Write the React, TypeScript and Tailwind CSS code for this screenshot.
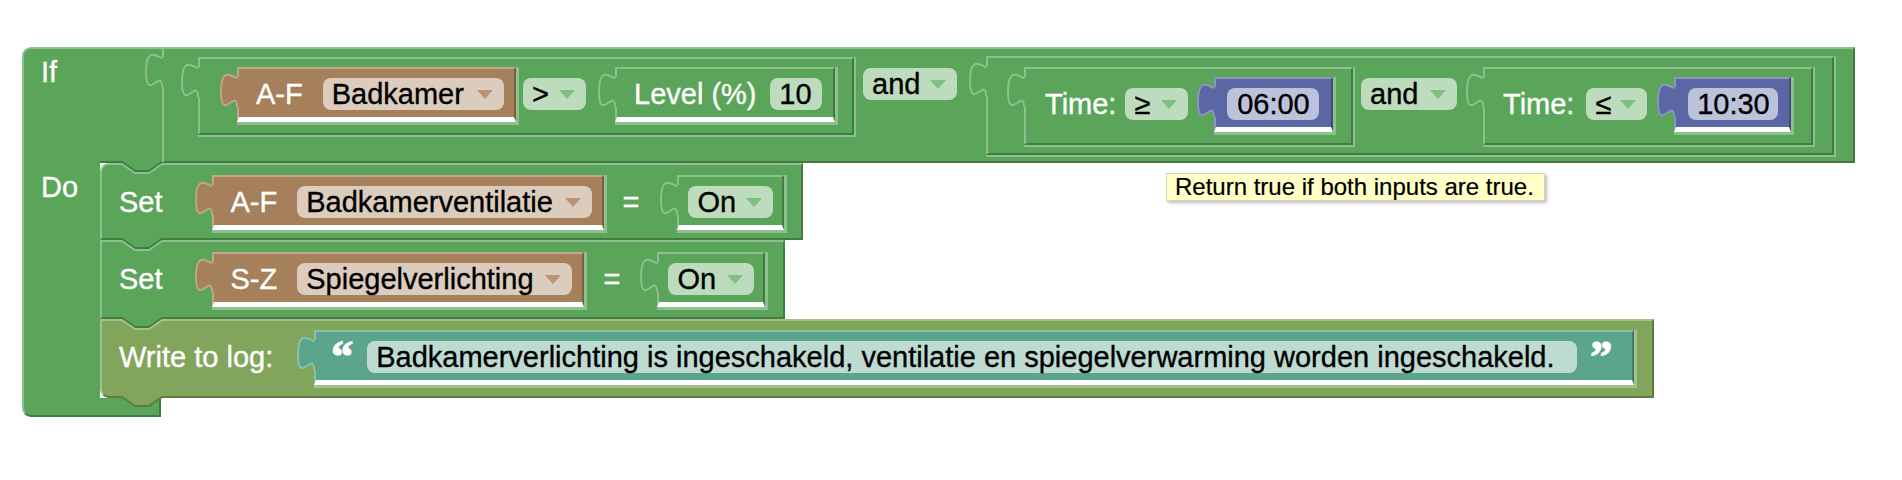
import React from "react";

function Arrow({ color }: { color: string }) {
  return (
    <svg width="16" height="9" viewBox="0 0 16 9" className="shrink-0">
      <polygon points="0,0 16,0 8,9" fill={color} />
    </svg>
  );
}

function Pill({ className, text, arrow }: { className: string; text: string; arrow?: string }) {
  return (
    <div
      className={`flex h-[32px] shrink-0 items-center whitespace-nowrap rounded-[8px] text-black ${
        arrow ? "justify-between pl-[9px] pr-[11px]" : "justify-center"
      } ${className}`}
    >
      <span>{text}</span>
      {arrow && <Arrow color={arrow} />}
    </div>
  );
}

function Lbl({ className = "", children }: { className?: string; children: React.ReactNode }) {
  return <span className={`flex h-[32px] shrink-0 items-center whitespace-nowrap ${className}`}>{children}</span>;
}

function Tab({ fill, stroke }: { fill: string; stroke: string }) {
  return (
    <svg width="20" height="30" viewBox="0 0 20 30" className="absolute left-[-18px] top-[8px] overflow-visible">
      <path d="M16 30 C16 10 0 46 0 15 C0 -16 16 5 16 0 L20 0 L20 30 Z" fill={fill} />
      <path d="M16 30 C16 10 0 46 0 15 C0 -16 16 5 16 0" fill="none" stroke={stroke} strokeWidth="2" />
    </svg>
  );
}

function Notch({ fill, dark, light }: { fill: string; dark: string; light: string }) {
  return (
    <svg width="42" height="14" viewBox="0 0 42 14" className="absolute left-[20px] top-[-4px] overflow-visible">
      <polygon points="0,0 40,0 27,11 13,11" fill={fill} />
      <polyline points="0,1 13,10 27,10 40,1" fill="none" stroke={dark} strokeWidth="2" />
      <polyline points="0,3 13,12 27,12 40,3" fill="none" stroke={light} strokeWidth="2" />
    </svg>
  );
}

function Val({
  rim,
  block,
  tabFill,
  tabStroke,
  children,
}: {
  rim: string;
  block: string;
  tabFill: string;
  tabStroke: string;
  children: React.ReactNode;
}) {
  return (
    <div className={`shrink-0 ${rim}`}>
      <div className={`relative flex items-start ${block}`}>
        <Tab fill={tabFill} stroke={tabStroke} />
        {children}
      </div>
    </div>
  );
}

const GA = "#7fbf7f";
const BA = "#b99574";

function TimeBlock({ first }: { first: boolean }) {
  return (
    <div className={`shrink-0 border-b-2 border-r-2 border-[#8cc08c] ${first ? "" : "ml-[26px]"}`}>
      <div
        className={`relative flex h-[78px] items-start border-2 border-b-[#427a42] border-l-[#8cc08c] border-r-[#427a42] border-t-[#8cc08c] bg-[#5ba55b] pt-[8px] ${
          first ? "w-[329px] pl-[19px]" : "w-[330px] pl-[18px]"
        }`}
      >
        <Tab fill="#5ba55b" stroke="#8cc08c" />
        <Lbl className="mt-[11px]">Time:</Lbl>
        {first ? (
          <Pill className="ml-[9px] mt-[11px] w-[63px] bg-[#bddbbd]" text="≥" arrow={GA} />
        ) : (
          <Pill className="ml-[12px] mt-[11px] w-[61px] bg-[#bddbbd]" text="≤" arrow={GA} />
        )}
        {first ? (
          <Val
            rim="ml-[26px] border-b-[3px] border-r-[3px] border-[#8cc08c]"
            block="h-[55px] w-[119px] border-2 border-b-[5px] border-b-white border-l-[#8c95c0] border-r-[#434c7b] border-t-[#8c95c0] bg-[#5b67a5] pl-[11px] pt-[9px]"
            tabFill="#5b67a5"
            tabStroke="#8c95c0"
          >
            <Pill className="w-[92px] bg-[#bdc2db]" text="06:00" />
          </Val>
        ) : (
          <Val
            rim="ml-[27px] border-b-[3px] border-r-[3px] border-[#8cc08c]"
            block="h-[55px] w-[117px] border-2 border-b-[5px] border-b-white border-l-[#8c95c0] border-r-[#434c7b] border-t-[#8c95c0] bg-[#5b67a5] pl-[12px] pt-[9px]"
            tabFill="#5b67a5"
            tabStroke="#8c95c0"
          >
            <Pill className="w-[90px] bg-[#bdc2db]" text="10:30" />
          </Val>
        )}
      </div>
    </div>
  );
}

function Compare() {
  return (
    <div className="shrink-0 border-b-2 border-r-2 border-[#8cc08c]">
      <div className="relative flex h-[78px] w-[656px] items-start border-2 border-b-[#427a42] border-l-[#8cc08c] border-r-[#427a42] border-t-[#8cc08c] bg-[#5ba55b] pl-[37px] pt-[8px]">
        <Tab fill="#5ba55b" stroke="#8cc08c" />
        <Val
          rim="border-b-[3px] border-r-[3px] border-[#8cc08c]"
          block="h-[55px] w-[279px] border-2 border-b-[5px] border-b-white border-l-[#c0a68c] border-r-[#7b5f43] border-t-[#c0a68c] bg-[#a5805b] pl-[17px] pt-[9px]"
          tabFill="#a5805b"
          tabStroke="#c0a68c"
        >
          <Lbl>A-F</Lbl>
          <Pill className="ml-[20px] w-[181px] bg-[#dbccbd]" text="Badkamer" arrow={BA} />
        </Val>
        <Pill className="ml-[4px] mt-[11px] w-[63px] bg-[#bddbbd]" text=">" arrow={GA} />
        <Val
          rim="ml-[29px] border-b-[3px] border-r-[3px] border-[#8cc08c]"
          block="h-[55px] w-[220px] border-2 border-b-[5px] border-b-white border-l-[#8cc08c] border-r-[#427a42] border-t-[#8cc08c] bg-[#5ba55b] pl-[17px] pt-[9px]"
          tabFill="#5ba55b"
          tabStroke="#8cc08c"
        >
          <Lbl>Level (%)</Lbl>
          <Pill className="ml-[13px] w-[52px] bg-[#bddbbd]" text="10" />
        </Val>
      </div>
    </div>
  );
}

function OuterAnd() {
  return (
    <div className="relative flex h-[116px] w-[1693px] shrink-0 items-start border-2 border-b-[#427a42] border-l-[#8cc08c] border-r-[#427a42] border-t-[#8cc08c] bg-[#5ba55b] pl-[34px] pt-[8px]">
      <Tab fill="#5ba55b" stroke="#8cc08c" />
      <Compare />
      <Pill className="ml-[7px] mt-[11px] w-[94px] bg-[#bddbbd]" text="and" arrow={GA} />
      <div className="ml-[29px] mt-[-1px] shrink-0 border-b-2 border-r-2 border-[#8cc08c]">
        <div className="relative flex h-[99px] w-[848px] items-start border-2 border-b-[#427a42] border-l-[#8cc08c] border-r-[#427a42] border-t-[#8cc08c] bg-[#5ba55b] pl-[36px] pt-[9px]">
          <Tab fill="#5ba55b" stroke="#8cc08c" />
          <TimeBlock first />
          <Pill className="ml-[6px] mt-[11px] w-[96px] bg-[#bddbbd]" text="and" arrow={GA} />
          <TimeBlock first={false} />
        </div>
      </div>
    </div>
  );
}

function SetBlock({ first }: { first: boolean }) {
  return (
    <div
      className={`relative flex shrink-0 items-start border-2 border-b-[#427a42] border-l-[#8cc08c] border-r-[#427a42] border-t-[#8cc08c] bg-[#5ba55b] pl-[17px] pt-[10px] ${
        first ? "h-[77px] w-[703px] rounded-tl-[9px]" : "h-[79px] w-[685px]"
      }`}
    >
      <Notch fill="#5ba55b" dark="#427a42" light="#8cc08c" />
      <Lbl className="mt-[11px]">Set</Lbl>
      {first ? (
        <Val
          rim="ml-[49px] border-b-[3px] border-r-[3px] border-[#8cc08c]"
          block="h-[55px] w-[392px] border-2 border-b-[5px] border-b-white border-l-[#c0a68c] border-r-[#7b5f43] border-t-[#c0a68c] bg-[#a5805b] pl-[17px] pt-[9px]"
          tabFill="#a5805b"
          tabStroke="#c0a68c"
        >
          <Lbl>A-F</Lbl>
          <Pill className="ml-[20px] w-[295px] bg-[#dbccbd]" text="Badkamerventilatie" arrow={BA} />
        </Val>
      ) : (
        <Val
          rim="ml-[49px] border-b-[3px] border-r-[3px] border-[#8cc08c]"
          block="h-[55px] w-[372px] border-2 border-b-[5px] border-b-white border-l-[#c0a68c] border-r-[#7b5f43] border-t-[#c0a68c] bg-[#a5805b] pl-[17px] pt-[9px]"
          tabFill="#a5805b"
          tabStroke="#c0a68c"
        >
          <Lbl>S-Z</Lbl>
          <Pill className="ml-[20px] w-[275px] bg-[#dbccbd]" text="Spiegelverlichting" arrow={BA} />
        </Val>
      )}
      <Lbl className={`mt-[11px] ${first ? "ml-[16px]" : "ml-[17px]"}`}>=</Lbl>
      {first ? (
        <Val
          rim="ml-[38px] border-b-[3px] border-r-[3px] border-[#8cc08c]"
          block="h-[55px] w-[107px] border-2 border-b-[5px] border-b-white border-l-[#8cc08c] border-r-[#427a42] border-t-[#8cc08c] bg-[#5ba55b] pl-[9px] pt-[9px]"
          tabFill="#5ba55b"
          tabStroke="#8cc08c"
        >
          <Pill className="w-[85px] bg-[#bddbbd]" text="On" arrow={GA} />
        </Val>
      ) : (
        <Val
          rim="ml-[37px] border-b-[3px] border-r-[3px] border-[#8cc08c]"
          block="h-[55px] w-[108px] border-2 border-b-[5px] border-b-white border-l-[#8cc08c] border-r-[#427a42] border-t-[#8cc08c] bg-[#5ba55b] pl-[9px] pt-[9px]"
          tabFill="#5ba55b"
          tabStroke="#8cc08c"
        >
          <Pill className="w-[86px] bg-[#bddbbd]" text="On" arrow={GA} />
        </Val>
      )}
    </div>
  );
}

function WriteBlock() {
  return (
    <div className="relative flex h-[79px] w-[1554px] shrink-0 items-start rounded-bl-[9px] border-2 border-b-[#5f7b43] border-l-[#a6c08c] border-r-[#5f7b43] border-t-[#a6c08c] bg-[#80a55b] pl-[17px] pt-[9px]">
      <Notch fill="#5ba55b" dark="#427a42" light="#a6c08c" />
      <Lbl className="mt-[11px]">Write to log:</Lbl>
      <Val
        rim="ml-[41px] border-b-[3px] border-r-[3px] border-[#a6c08c]"
        block="h-[55px] w-[1320px] border-2 border-b-[5px] border-b-white border-l-[#8cc0af] border-r-[#437b68] border-t-[#8cc0af] bg-[#5ba58c] pl-[15px] pt-[9px]"
        tabFill="#5ba58c"
        tabStroke="#8cc0af"
      >
        <span className="mt-[-6px] w-[21px] shrink-0 font-['Liberation_Serif',serif] text-[44px] font-bold leading-[44px] [-webkit-text-stroke:1.2px_white]">“</span>
        <div className="ml-[15px] flex h-[32px] w-[1210px] shrink-0 items-center whitespace-nowrap rounded-[8px] bg-[#bddbd1] pl-[9px] text-black">
          Badkamerverlichting is ingeschakeld, ventilatie en spiegelverwarming worden ingeschakeld.
        </div>
        <span className="ml-[13px] mt-[-6px] w-[21px] shrink-0 font-['Liberation_Serif',serif] text-[44px] font-bold leading-[44px] [-webkit-text-stroke:1.2px_white]">”</span>
      </Val>
      <svg width="42" height="12" viewBox="0 0 42 12" className="absolute left-[20px] top-[75px] overflow-visible">
        <polygon points="0,0 40,0 27,9 13,9" fill="#80a55b" />
        <polyline points="0,1 13,10 27,10 40,1" fill="none" stroke="#5f7b43" strokeWidth="2" />
      </svg>
    </div>
  );
}

export default function App() {
  return (
    <div className="relative h-[480px] w-[1902px] overflow-hidden bg-white pl-[22px] pt-[47px] font-['Liberation_Sans',Arial,sans-serif] text-[29px] leading-[29px] text-white [-webkit-text-stroke:0.35px]">
      <div className="flex w-fit flex-col">
        <div className="flex">
          <div className="flex h-[116px] w-[140px] shrink-0 flex-col rounded-tl-[9px] border-l-2 border-t-2 border-[#8cc08c] bg-[#5ba55b]">
            <div className="pl-[17px] pt-[9px]">If</div>
            <div className="ml-[76px] mt-auto h-[2px] bg-[#427a42]" />
          </div>
          <OuterAnd />
        </div>
        <div className="flex">
          <div className="w-[78px] shrink-0 border-l-2 border-[#8cc08c] bg-[#5ba55b] pl-[17px] pt-[10px]">Do</div>
          <div className="flex flex-col">
            <SetBlock first />
            <SetBlock first={false} />
            <WriteBlock />
          </div>
        </div>
        <div className="h-[19px] w-[139px] rounded-bl-[9px] border-b-2 border-l-2 border-r-2 border-b-[#427a42] border-l-[#8cc08c] border-r-[#427a42] bg-[#5ba55b]" />
      </div>
      <div className="absolute left-[1166px] top-[173px] flex h-[28px] w-[379px] items-center border border-[#d6d6b0] bg-[#ffffc7] pl-[8px] text-[24px] leading-[24px] text-black shadow-[2px_2px_3px_rgba(0,0,0,0.25)] [-webkit-text-stroke:0.2px]">
        Return true if both inputs are true.
      </div>
    </div>
  );
}
